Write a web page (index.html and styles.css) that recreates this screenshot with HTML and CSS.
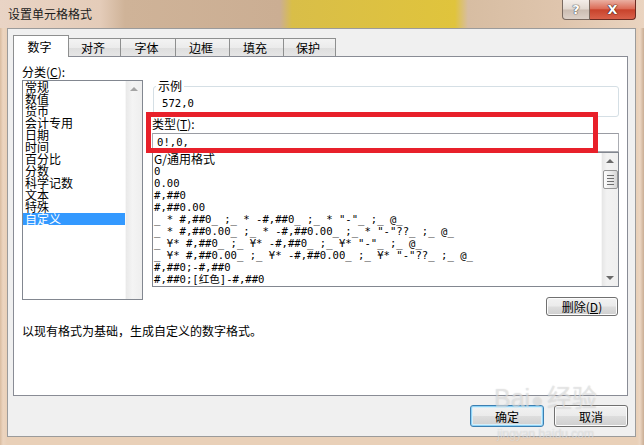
FILE: index.html
```html
<!DOCTYPE html>
<html lang="zh-CN">
<head>
    <meta charset="UTF-8">
    <title>设置单元格格式</title>
    <link rel="stylesheet" href="styles.css">
</head>
<body>
<div class="window">
    <div class="titlebar">
        <span class="title">设置单元格格式</span>
        <div class="caption-buttons">
            <span class="cap-btn help">?</span>
            <span class="cap-btn close">X</span>
        </div>
    </div>

    <div class="client">
        <div class="tabs">
            <span class="tab active">数字</span>
            <span class="tab w52">对齐</span>
            <span class="tab w55">字体</span>
            <span class="tab w54">边框</span>
            <span class="tab w54">填充</span>
            <span class="tab w52">保护</span>
        </div>

        <div class="panel">
            <div class="panel-grid">
                <div class="label">分类(<u>C</u>):</div>
                <div class="listbox cat-list">
                    <ul class="items">
                        <li>常规</li>
                        <li>数值</li>
                        <li>货币</li>
                        <li>会计专用</li>
                        <li>日期</li>
                        <li>时间</li>
                        <li>百分比</li>
                        <li>分数</li>
                        <li>科学记数</li>
                        <li>文本</li>
                        <li>特殊</li>
                        <li class="selected">自定义</li>
                    </ul>
                    <div class="scrollbar pale">
                        <span class="arrow up"></span>
                    </div>
                </div>

                <div class="detail">
                    <fieldset class="sample">
                        <legend>示例</legend>
                        <div class="sample-value">572,0</div>
                    </fieldset>
                    <div class="label type-label">类型(<u>T</u>):</div>
                    <div class="type-input">0!,0,</div>
                    <div class="listbox fmt-list">
                        <ul class="items mono">
                            <li>G/通用格式</li>
                            <li>0</li>
                            <li>0.00</li>
                            <li>#,##0</li>
                            <li>#,##0.00</li>
                            <li>_ * #,##0_ ;_ * -#,##0_ ;_ * "-"_ ;_ @_</li>
                            <li>_ * #,##0.00_ ;_ * -#,##0.00_ ;_ * "-"??_ ;_ @_</li>
                            <li>_ ¥* #,##0_ ;_ ¥* -#,##0_ ;_ ¥* "-"_ ;_ @_</li>
                            <li>_ ¥* #,##0.00_ ;_ ¥* -#,##0.00_ ;_ ¥* "-"??_ ;_ @_</li>
                            <li>#,##0;-#,##0</li>
                            <li>#,##0;[红色]-#,##0</li>
                        </ul>
                        <div class="scrollbar">
                            <span class="arrow up"></span>
                            <span class="thumb"><i></i><i></i><i></i><i></i></span>
                            <span class="spacer"></span>
                            <span class="arrow down"></span>
                        </div>
                    </div>
                    <div class="detail-actions">
                        <button class="btn small">删除(<u>D</u>)</button>
                    </div>
                </div>
            </div>
            <p class="hint">以现有格式为基础，生成自定义的数字格式。</p>
        </div>

        <div class="footer">
            <button class="btn default">确定</button>
            <button class="btn">取消</button>
        </div>
    </div>

    <!-- red annotation drawn over the dialog -->
    <div class="mark-box"></div>

    <div class="watermark">
        <span class="wm-logo">Bai<span class="paw">●</span>经验</span>
        <span class="wm-url">jingyan.baidu.com</span>
    </div>
</div>
</body>
</html>
```

FILE: styles.css
```css
* {
    box-sizing: border-box;
}
body {
    margin: 0;
    font-family: "Noto Sans CJK SC", "Liberation Sans", sans-serif;
    font-size: 12px;
    color: #000;
    background: #e9d0b8;
}
.window {
    position: relative;
    width: 644px;
    height: 445px;
    display: flex;
    flex-direction: column;
    background: linear-gradient(to right, #d9bca0 0, #ecd5c0 3px, #e9d0b8 7px, #e9d0b8 637px, #ecd6c2 640px, #c9ad94 644px);
    overflow: hidden;
}

/* title bar */
.titlebar {
    height: 28px;
    display: flex;
    justify-content: space-between;
    align-items: flex-start;
    background: linear-gradient(to right, #e9d4c5 0, #e4ccb9 100px, #cfb398 125px, #cbae93 280px, #d9be48 292px, #e0c43c 455px, #d7bda2 468px, #dfc5ad 560px, #ead4c0 644px);
}
.title {
    padding: 7px 0 0 8px;
    line-height: 14px;
    color: #1b1b1b;
}
.caption-buttons {
    display: flex;
    margin-right: 8px;
}
.cap-btn {
    height: 20px;
    display: flex;
    align-items: center;
    justify-content: center;
    font-family: "DejaVu Sans", sans-serif;
    font-weight: bold;
    color: #fff;
}
.help {
    width: 28px;
    font-size: 13px;
    border: 1px solid #7a6a60;
    border-top: none;
    border-radius: 0 0 0 4px;
    background: linear-gradient(#f4eee9, #e2d8d0 48%, #cbbcb1 52%, #ddd1c8);
    text-shadow: 0 0 1px #555, 0 0 1px #555, 0 0 1px #555;
}
.close {
    width: 46px;
    font-size: 13px;
    border: 1px solid #6a2b22;
    border-top: none;
    border-left: none;
    border-radius: 0 0 4px 0;
    background: linear-gradient(#eab0a2, #dc6d58 45%, #c8432c 52%, #d9614a);
    text-shadow: 0 0 1px #3a1a14, 0 0 1px #3a1a14, 0 0 1px #3a1a14;
}

/* client area */
.client {
    flex: 1;
    margin: 0 8px 8px 7px;
    padding: 6px 7px 0 5px;
    background: #f0f0f0;
    border: 1px solid #9b9b9b;
    display: flex;
    flex-direction: column;
}
.tabs {
    display: flex;
    align-items: flex-start;
    height: 22px;
    margin-bottom: -1px;
}
.tab {
    height: 19px;
    margin-top: 3px;
    margin-left: -1px;
    border: 1px solid #8e8f8f;
    border-bottom: none;
    background: linear-gradient(#f3f3f3, #ebebeb 50%, #dedede 51%, #e7e7e7);
    text-align: center;
    line-height: 17px;
    padding-right: 3px;
}
.tab.active {
    position: relative;
    z-index: 1;
    width: 56px;
    height: 22px;
    margin-top: 0;
    margin-left: 0;
    background: #fff;
    line-height: 21px;
}
.w52 { width: 53px; }
.w54 { width: 55px; }
.w55 { width: 56px; }

.panel {
    height: 340px;
    background: #fff;
    border: 1px solid #898c95;
    padding: 9px 8px 0 8px;
}
.panel-grid {
    display: grid;
    grid-template-columns: 121px 1fr;
    column-gap: 9px;
    row-gap: 2px;
}
.label {
    line-height: 12px;
    grid-column: 1 / 3;
}
.label u, .btn u {
    text-decoration: underline;
}

.listbox {
    display: flex;
    border: 1px solid #828790;
    background: #fff;
}
.items {
    flex: 1;
    margin: 0;
    padding: 0;
    list-style: none;
}
.items li {
    line-height: 12px;
    height: 12px;
    white-space: pre;
    padding-left: 2px;
}
.items li.selected {
    background: #3399ff;
    color: #fff;
}
.cat-list {
    height: 220px;
}
.mono li {
    font-family: "DejaVu Sans Mono", "Noto Sans CJK SC", monospace;
    font-size: 10.6px;
    padding-left: 1px;
}
.mono li:first-child {
    font-family: "Noto Sans CJK SC", sans-serif;
    font-size: 12px;
}

.scrollbar {
    width: 17px;
    display: flex;
    flex-direction: column;
    align-items: center;
    background: linear-gradient(to right, #e6e6e6, #f2f2f2 30%, #efefef);
    border-left: 1px solid #f7f7f7;
}
.scrollbar.pale {
    background: linear-gradient(to right, #e9e9e9, #f4f4f4 40%, #eeeeee);
}
.arrow {
    width: 0;
    height: 0;
    margin: 6px 0;
    border-left: 4px solid transparent;
    border-right: 4px solid transparent;
}
.arrow.up {
    border-bottom: 4px solid #6a6a6a;
}
.pale .arrow.up {
    border-bottom-color: #a4a4a4;
}
.arrow.down {
    border-top: 4px solid #6a6a6a;
}
.thumb {
    width: 15px;
    height: 19px;
    margin-top: 1px;
    border: 1px solid #959595;
    border-radius: 2px;
    background: linear-gradient(to right, #fcfcfc, #e8e8e8 60%, #d6d6d6);
    display: flex;
    flex-direction: column;
    align-items: center;
    justify-content: center;
    gap: 2px;
}
.thumb i {
    display: block;
    width: 7px;
    height: 1px;
    background: #6e6e6e;
}
.spacer {
    flex: 1;
}

.detail {
    display: flex;
    flex-direction: column;
}
.sample {
    margin: 0 0 0 1px;
    padding: 0 0 7px 2px;
    height: 37px;
    border: 1px solid #d5dfe5;
    border-radius: 3px;
    min-width: 0;
}
.sample legend {
    padding: 0 2px;
    line-height: 12px;
}
.sample-value {
    padding: 5px 0 0 6px;
    line-height: 12px;
    font-family: "DejaVu Sans Mono", monospace;
    font-size: 10.6px;
}
.type-label {
    margin-top: 1px;
}
.type-input {
    margin-top: 3px;
    height: 19px;
    padding-left: 4px;
    border: 1px solid #abadb3;
    border-top-color: #9a9ca3;
    line-height: 17px;
    font-family: "DejaVu Sans Mono", monospace;
    font-size: 10.6px;
}
.fmt-list {
    height: 135px;
}
.detail-actions {
    display: flex;
    justify-content: flex-end;
    margin-top: 10px;
    padding-right: 1px;
}

.hint {
    margin: 9px 0 0 0;
    line-height: 12px;
}

/* buttons */
.btn {
    width: 74px;
    height: 22px;
    padding: 0;
    font-family: "Noto Sans CJK SC", sans-serif;
    font-size: 12px;
    color: #000;
    border: 1px solid #707070;
    border-radius: 3px;
    background: linear-gradient(#f2f2f2, #ebebeb 48%, #dddddd 52%, #cfcfcf);
    box-shadow: inset 0 0 0 1px #fcfcfc;
}
.btn.small {
    width: 72px;
    height: 19px;
    line-height: 15px;
}
.btn.default {
    border-color: #3c7fb1;
    box-shadow: inset 0 0 0 1px #8ed3f7, inset 0 0 0 2px #d6eef9;
}
.footer {
    display: flex;
    justify-content: flex-end;
    gap: 10px;
    margin-top: 9px;
}

/* annotation */
.mark-box {
    position: absolute;
    left: 146px;
    top: 112px;
    width: 452px;
    height: 41px;
    border: 5px solid #e8202a;
}

/* faint site watermark */
.watermark {
    position: absolute;
    left: 494px;
    top: 384px;
    display: flex;
    flex-direction: column;
    align-items: center;
    color: rgba(255, 255, 255, 0.45);
    text-shadow: 0 0 1px rgba(140, 140, 140, 0.45);
    pointer-events: none;
}
.wm-logo {
    font-family: "Liberation Sans", sans-serif;
    font-size: 25px;
    line-height: 28px;
}
.paw {
    font-size: 20px;
    margin: 0 4px 0 1px;
}
.wm-url {
    font-family: "Liberation Sans", sans-serif;
    font-size: 12px;
    line-height: 12px;
    margin-top: 14px;
}
```
